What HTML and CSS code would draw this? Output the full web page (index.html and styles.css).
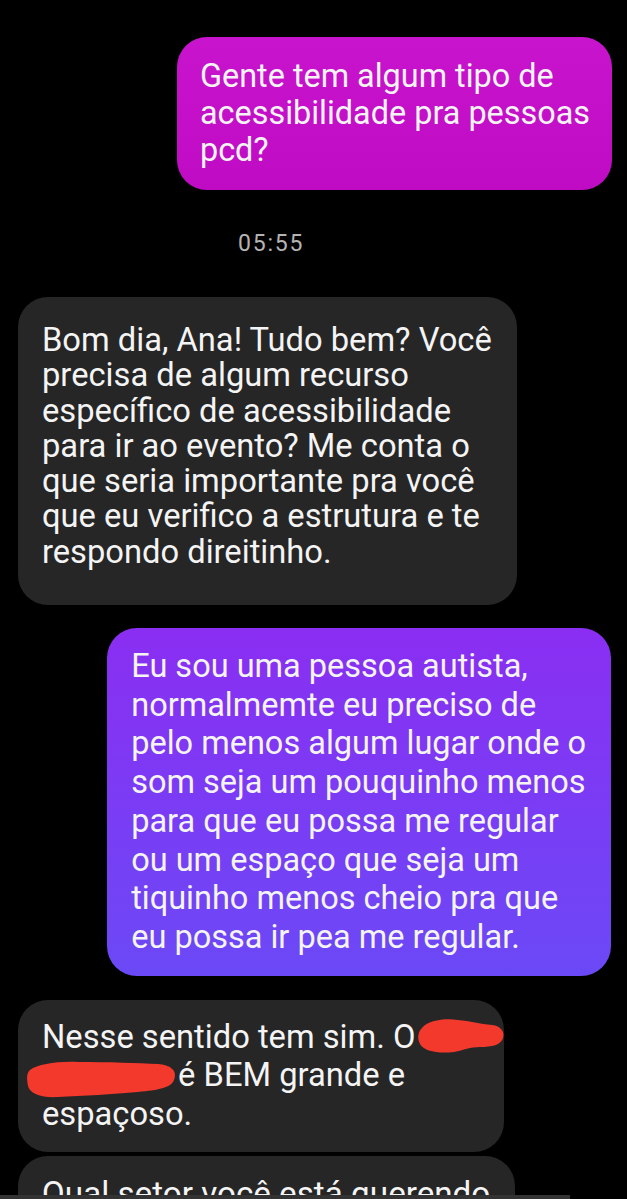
FILE: index.html
```html
<!DOCTYPE html>
<html lang="pt-BR">
<head>
<meta charset="utf-8">
<title>Chat</title>
<link rel="stylesheet" href="styles.css">
</head>
<body>
<div class="chat">
  <div class="bubble sent magenta">Gente tem algum tipo de<br>acessibilidade pra pessoas<br>pcd?</div>
  <div class="time">05:55</div>
  <div class="bubble recv first">Bom dia, Ana! Tudo bem? Você<br>precisa de algum recurso<br>específico de acessibilidade<br>para ir ao evento? Me conta o<br>que seria importante pra você<br>que eu verifico a estrutura e te<br>respondo direitinho.</div>
  <div class="bubble sent violet">Eu sou uma pessoa autista,<br>normalmemte eu preciso de<br>pelo menos algum lugar onde o<br>som seja um pouquinho menos<br>para que eu possa me regular<br>ou um espaço que seja um<br>tiquinho menos cheio pra que<br>eu possa ir pea me regular.</div>
  <div class="bubble recv redacted">Nesse sentido tem sim. O <span class="hide w1"></span><br><span class="hide w2"></span> é BEM grande e<br>espaçoso.
    <svg class="scribbles" viewBox="0 0 490 153" width="490" height="153" aria-hidden="true">
      <path d="M404 28 C410 20 428 18 440 20 C452 21 462 24 474 25 C483 26 487 32 485 38 C483 45 474 47 462 47 C452 47 446 50 436 52 C420 54 406 51 402 44 C399 38 400 32 404 28 Z" fill="#f2392c"/>
      <path d="M12 70 C20 64 40 61 60 62 C90 62 120 63 140 64 C152 65 160 70 156 80 C153 88 140 90 120 92 C95 94 65 96 40 97 C24 98 12 94 10 86 C9 79 8 74 12 70 Z" fill="#f2392c"/>
    </svg>
  </div>
  <div class="bubble recv last">Qual setor você está querendo</div>
</div>
<div class="bottom-strip"></div>
</body>
</html>
```
FILE: styles.css
```css
html, body {
  margin: 0;
  padding: 0;
  background: #000;
}
body {
  width: 627px;
  height: 1199px;
  overflow: hidden;
  position: relative;
  font-family: Roboto, "Liberation Sans", sans-serif;
}
.chat {
  display: flex;
  flex-direction: column;
  padding-top: 37px;
}
.bubble {
  border-radius: 30px;
  color: #f4f4f4;
  font-size: 32.7px;
  line-height: 38.7px;
  padding: 19px 25px 19px 24px;
  white-space: nowrap;
}
.sent {
  align-self: flex-end;
}
.recv {
  align-self: flex-start;
  margin-left: 18px;
  background: #262626;
}
.magenta {
  margin-right: 15px;
  background: linear-gradient(#c814cc, #c00bc4);
  padding: 21px 22px 21px 23px;
  font-size: 32.4px;
  line-height: 37px;
}
.time {
  margin-top: 41px;
  margin-left: 238px;
  font-size: 23px;
  line-height: 26px;
  letter-spacing: 1.8px;
  color: #b3b3b3;
}
.first {
  margin-top: 40px;
  line-height: 35.3px;
  padding-top: 26px;
  padding-bottom: 35px;
}
.violet {
  margin-top: 23px;
  margin-right: 16px;
  font-size: 32.5px;
  background: linear-gradient(#8a2ef2, #6b49f6);
}
.redacted {
  margin-top: 24px;
  position: relative;
  padding-top: 18px;
  padding-bottom: 18px;
}
.hide {
  display: inline-block;
  height: 1px;
}
.w1 { width: 55px; }
.w2 { width: 128px; }
.scribbles {
  position: absolute;
  left: 0;
  top: 0;
}
.last {
  margin-top: 4px;
  font-size: 33.2px;
}
.bottom-strip {
  position: absolute;
  left: 0;
  bottom: 0;
  width: 570px;
  height: 4px;
  background: #333;
}
```
